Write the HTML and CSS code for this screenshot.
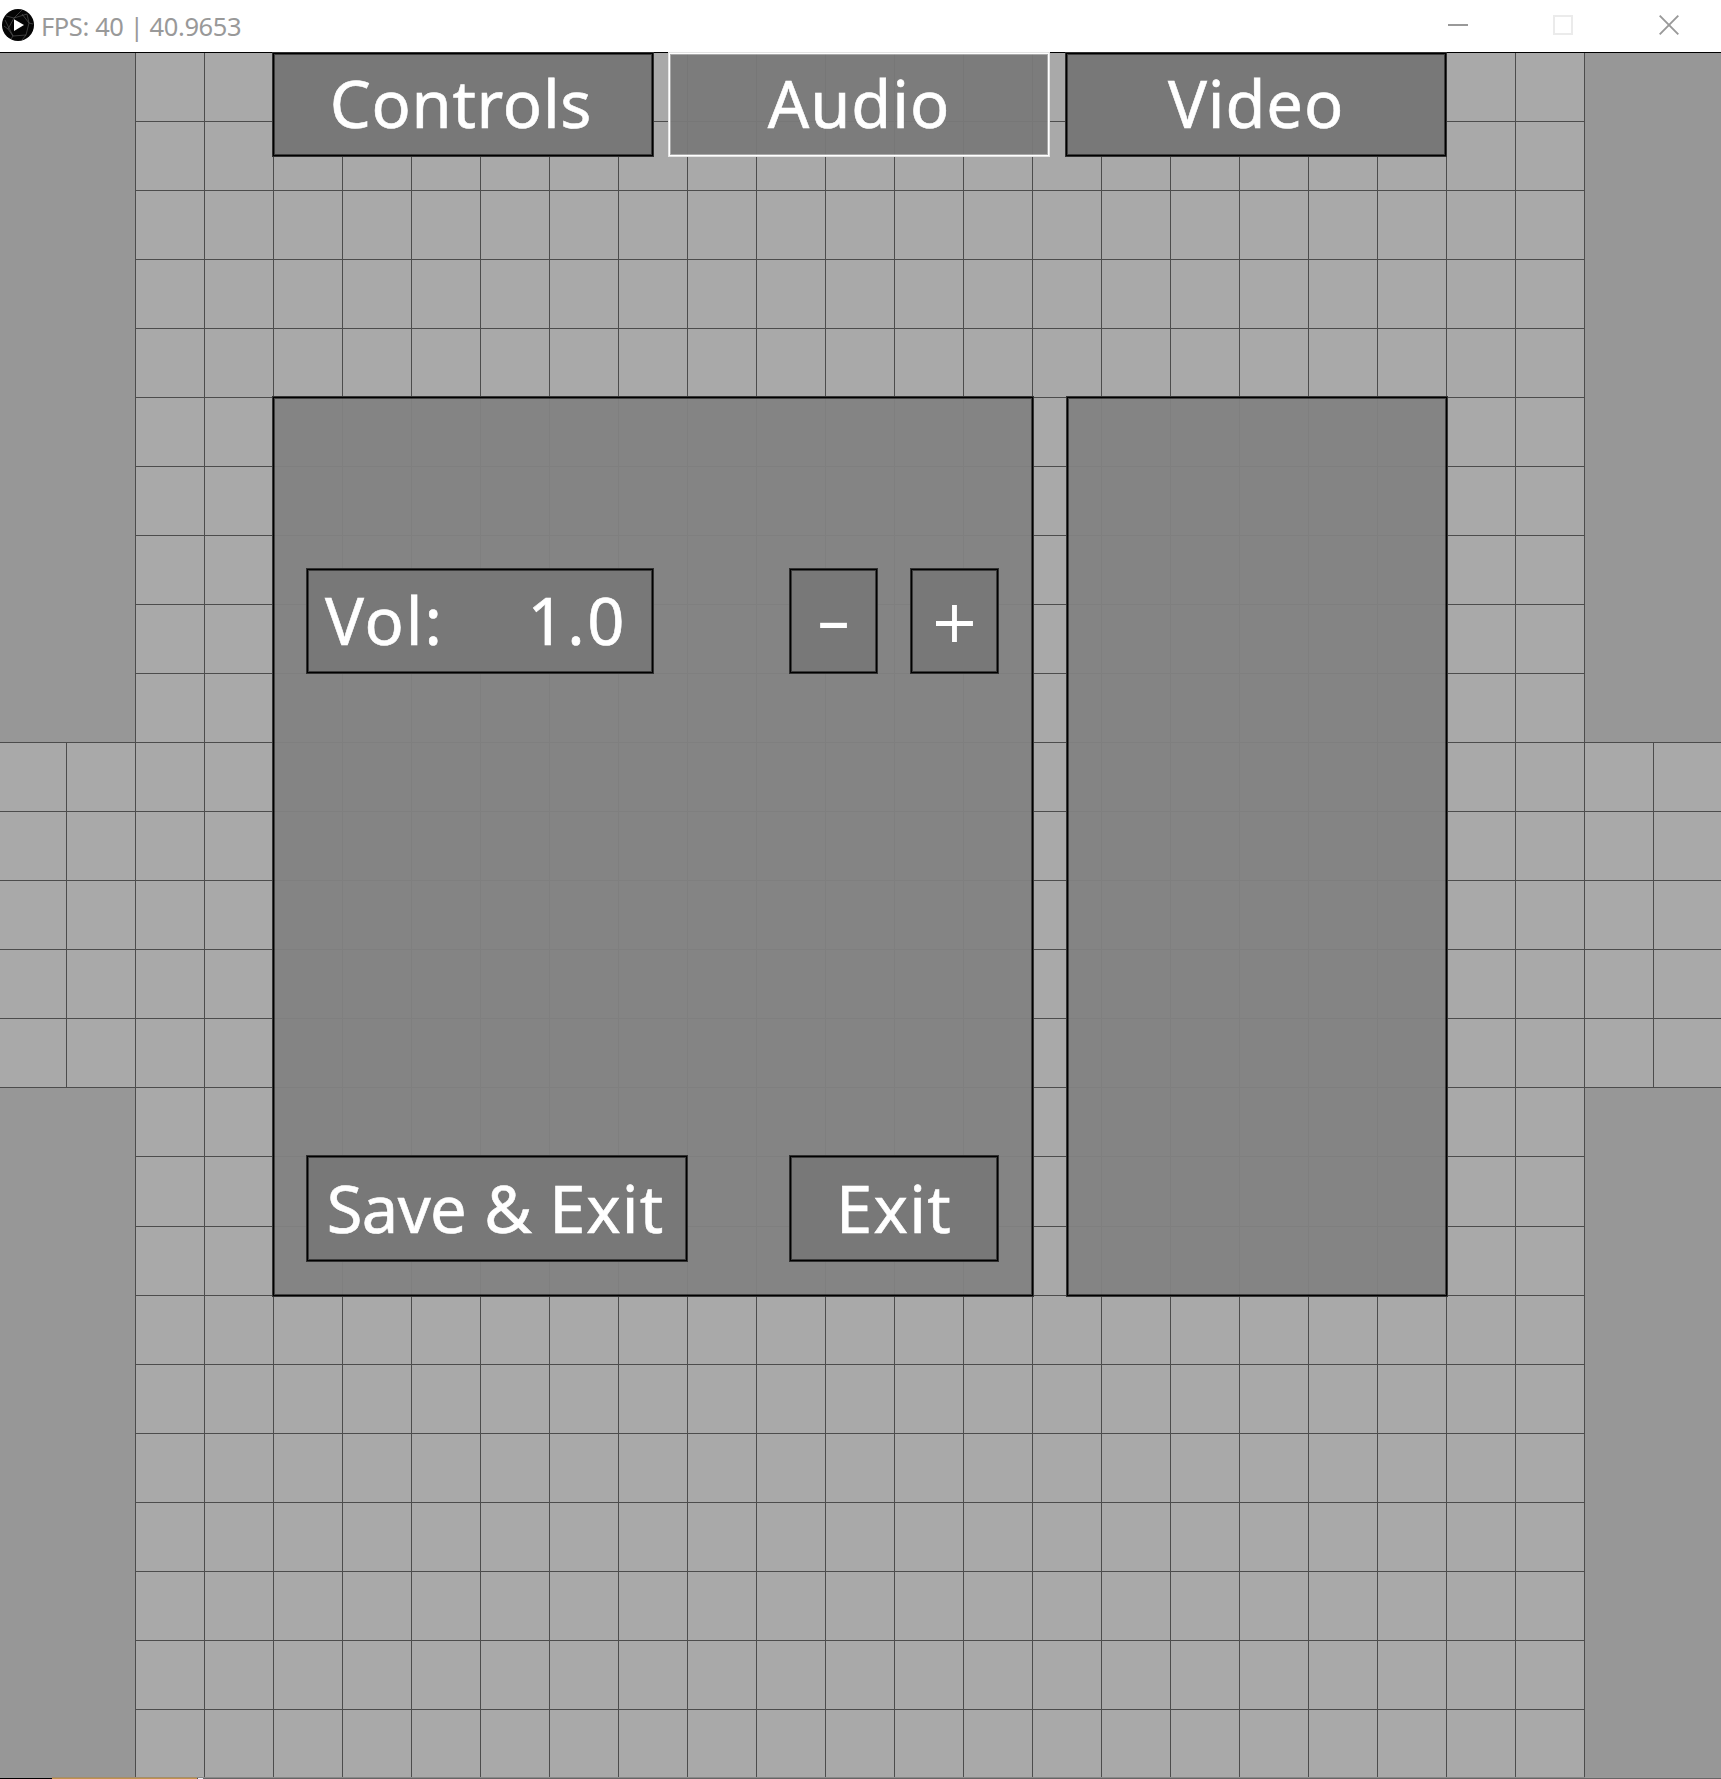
FILE: index.html
```html
<!DOCTYPE html>
<html lang="en">
<head>
<meta charset="utf-8">
<title>FPS: 40 | 40.9653</title>
<link rel="stylesheet" href="styles.css">
</head>
<body>
<header class="titlebar">
  <svg class="app-icon" width="32" height="32" viewBox="0 0 32 32">
    <circle cx="16" cy="16" r="16" fill="#050505"/>
    <path d="M4 7 12 9 20 1M12 9 6 20 2 17M12 9 25 5 27 14 31 15M6 20 11 27 24 26 27 14M11 27 9 30M24 26 20 31M3 11 11 27M20 5 27 14" fill="none" stroke="#555" stroke-width=".7"/>
    <path d="M12 10.200 22 16 12 22Z" fill="#fff"/>
  </svg>
  <h1 class="title">FPS: 40 | 40.9653</h1>
  <div class="window-buttons">
    <svg width="20" height="20" viewBox="0 0 20 20"><path d="M0 10H20" stroke="#999" stroke-width="2"/></svg>
    <svg width="20" height="20" viewBox="0 0 20 20"><rect x="1" y="1" width="18" height="18" fill="none" stroke="#ebebeb" stroke-width="2"/></svg>
    <svg class="close" width="20" height="20" viewBox="0 0 20 20"><path d="M.7.7 19.300 19.300M19.300.7.7 19.300" stroke="#999" stroke-width="1.900"/></svg>
  </div>
</header>
<main class="stage">
  <svg class="field" width="1721" height="1727" viewBox="0 52 1721 1727" shape-rendering="crispEdges">
    <defs>
      <pattern id="upper" x="135" y="52" width="69" height="69" patternUnits="userSpaceOnUse">
        <path d="M0 0H69V1H1V69H0Z" fill="#4c4c4c"/>
      </pattern>
      <pattern id="lower" x="135" y="53" width="69" height="69" patternUnits="userSpaceOnUse">
        <path d="M0 0H69V1H1V69H0Z" fill="#4c4c4c"/>
      </pattern>
    </defs>
    <path d="M135 52H1585V742H1721V1088H1585V1779H135V1088H0V742H135Z" fill="#a9a9a9"/>
    <path d="M135 52H1585V742H1721V1088H1585V1170H135V1088H0V742H135Z" fill="url(#upper)"/>
    <path d="M135 1170H1585V1779H135Z" fill="url(#lower)"/>
    <path d="M0 52H1721V53H0Z" fill="#000"/>
    <path d="M135 1777H1585V1778H135Z" fill="#888"/>
    <path d="M0 1778H52V1779H0Z" fill="#000"/>
    <path d="M52 1777H197V1778H52Z" fill="#a38d6e"/>
    <path d="M52 1778H197V1779H52Z" fill="#c0934e"/>
    <path d="M198 1778H203V1779H198Z" fill="#e8f0f4"/>
    <path d="M203 1778H1721V1779H203Z" fill="#666"/>
  </svg>
  <nav class="tabs">
    <button class="box tab tab-controls">Controls</button>
    <button class="box tab tab-active">Audio</button>
    <button class="box tab tab-video">Video</button>
  </nav>
  <div class="panels">
    <section class="box panel">
      <div class="row">
        <div class="box volume"><span>Vol:</span><span class="value">1.0</span></div>
        <div class="steppers">
          <button class="box step minus"><span>-</span></button>
          <button class="box step plus">+</button>
        </div>
      </div>
      <div class="row actions">
        <button class="box save"><span class="tight">Save</span><span> </span><span class="tight">&amp;</span><span> Exit</span></button>
        <button class="box exit">Exit</button>
      </div>
    </section>
    <aside class="box panel"></aside>
  </div>
</main>
</body>
</html>
```

FILE: styles.css
```css
* { box-sizing: border-box; }

body {
  margin: 0;
  width: 1721px;
  height: 1779px;
  overflow: hidden;
  font-family: "Noto Sans", "Open Sans", sans-serif;
}

.titlebar {
  display: flex;
  align-items: center;
  height: 52px;
  padding: 0 42px 2px 2px;
  background: #fff;
}

.title {
  flex: 1;
  margin: 0 0 0 7px;
  font-size: 25.5px;
  font-weight: 400;
  line-height: 50px;
  padding-top: 1px;
  letter-spacing: -.4px;
  color: #999;
}

.window-buttons { display: flex; gap: 85px; }
.window-buttons svg { display: block; }
.window-buttons .close { margin-left: 1px; }

.stage {
  position: relative;
  height: 1727px;
  padding-left: 272px;
  background: #979797;
}

.field {
  position: absolute;
  inset: 0;
  z-index: 0;
}

.box {
  position: relative;
  display: flex;
  align-items: center;
  justify-content: center;
  margin: 0;
  padding: 0 0 3px;
  border: 1px solid rgba(0, 0, 0, .6);
  box-shadow: inset 0 0 0 1px #000, inset 0 0 0 2px rgba(0, 0, 0, .5);
  background-color: #787878;
  color: #fff;
  font: 400 65px/90px "Noto Sans", "Open Sans", sans-serif;
  letter-spacing: .9px;
  -webkit-text-stroke: .6px #fff;
  white-space: pre;
}

.tabs {
  display: grid;
  grid-template-columns: 382px 382px 383px;
  column-gap: 14px;
  height: 105px;
}

.tab-controls { padding-right: 4px; letter-spacing: .7px; }
.tab-video { margin-left: 1px; }

.tab-active {
  border-color: rgba(255, 255, 255, .8);
  box-shadow: inset 0 0 0 1px #fff, inset 0 0 0 2px rgba(255, 255, 255, .35);
  background-color: rgba(121, 121, 121, .95);
}

.panels {
  display: grid;
  grid-template-columns: 762px 382px;
  column-gap: 32px;
  height: 901px;
  margin-top: 239px;
}

.panel {
  flex-direction: column;
  align-items: stretch;
  justify-content: space-between;
  padding: 171px 34px 34px 33px;
  background-color: rgba(130, 130, 130, .95);
}

.row {
  display: flex;
  justify-content: space-between;
  height: 106px;
}

.actions { height: 107px; }
.actions .box { padding-bottom: 2px; }

.volume {
  width: 348px;
  justify-content: space-between;
  padding: 0 26px 2px 18px;
  letter-spacing: 1.9px;
}

.value { letter-spacing: 2.6px; }

.steppers { display: flex; gap: 32px; }
.step { width: 89px; letter-spacing: 0; -webkit-text-stroke: 0; }
.step.minus { padding-bottom: 6px; }
.minus span { transform: scaleX(1.7); }

.step.plus {
  padding: 1px 0 0;
  font-family: "DejaVu Sans", sans-serif;
  font-size: 59px;
}

.actions .save { width: 382px; padding-right: 3px; letter-spacing: 1.1px; }
.save .tight { letter-spacing: -.6px; }
.exit { width: 210px; letter-spacing: 1.3px; }
```
